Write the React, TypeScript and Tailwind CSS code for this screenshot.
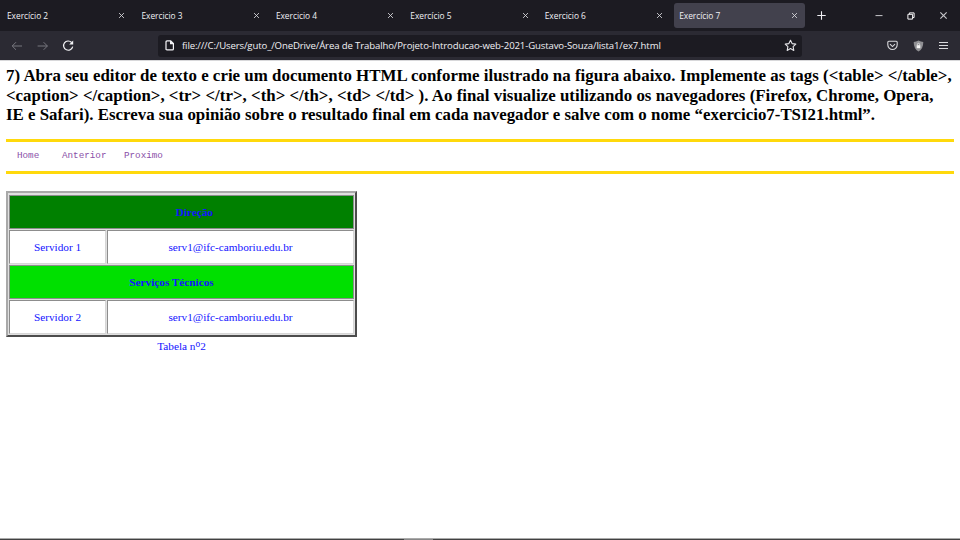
import React from "react";

const tabs = ["Exercício 2", "Exercicio 3", "Exercicio 4", "Exercício 5", "Exercicio 6", "Exercício 7"];

function Cross({ className, size }: { className: string; size: number }) {
  return (
    <svg className={className} width={size} height={size} viewBox="0 0 8 8" fill="none" stroke="currentColor" strokeWidth="1">
      <path d="M1.2 1.2 6.8 6.8M6.8 1.2 1.2 6.8" />
    </svg>
  );
}

function Tab({ title, active }: { title: string; active: boolean }) {
  return (
    <div
      className={
        active
          ? "flex h-[25px] w-[131.3px] shrink-0 items-center justify-between rounded-[3px] bg-[#42414d] pr-[7px] pl-[5.5px]"
          : "flex h-[25px] w-[131.3px] shrink-0 items-center justify-between pr-[7.5px] pl-[5.5px]"
      }
    >
      <span className="text-[8.4px] leading-3 tracking-[-0.03px] whitespace-nowrap text-[#f0f0f4]">{title}</span>
      <Cross className="text-[#d8d8dd]" size={7} />
    </div>
  );
}

function TabBar() {
  return (
    <div className="flex h-[31px] items-center bg-[#1c1b22] pl-[1.5px]">
      <div className="flex gap-[3.15px]">
        {tabs.map((t, i) => (
          <Tab key={t} title={t} active={i === 5} />
        ))}
      </div>
      <svg className="ml-3 text-[#f0f0f4]" width="9" height="9" viewBox="0 0 9 9" stroke="currentColor" strokeWidth="1.1">
        <path d="M4.5 .3v8.4M.3 4.5h8.4" />
      </svg>
      <div className="mr-3 ml-auto flex items-center gap-6">
        <svg width="8" height="8" viewBox="0 0 8 8" stroke="#c8c8cc" strokeWidth="1">
          <path d="M.5 3.6h7" />
        </svg>
        <svg width="8" height="8" viewBox="0 0 8 8" fill="none" stroke="#f8f8fa" strokeWidth="1">
          <path d="M.9 2.3h4.7v4.8H.9zM2.4 2.1V.9h4.7v4.6H5.9" />
        </svg>
        <Cross className="text-[#c8c8cc]" size={9} />
      </div>
    </div>
  );
}

function Toolbar() {
  return (
    <div className="flex h-[29px] items-center bg-[#2b2a33] pl-[11px]">
      <svg width="12" height="10" viewBox="0 0 12 10" fill="none" stroke="#77767e" strokeWidth="1">
        <path d="M11 5H1.2M5 1.2 1.2 5 5 8.8" />
      </svg>
      <svg className="ml-[14px]" width="12" height="10" viewBox="0 0 12 10" fill="none" stroke="#77767e" strokeWidth="1">
        <path d="M.6 5h9.8M6.6 1.2 10.4 5 6.6 8.8" />
      </svg>
      <svg className="ml-[12.5px]" width="13" height="12" viewBox="0 0 13 12" fill="none" stroke="#f4f4f7" strokeWidth="1.2">
        <path d="M10.7 6.6A4.6 4.6 0 1 1 9.6 2.5" />
        <path d="M11.2.6v4H7.2z" fill="#f4f4f7" stroke="none" />
      </svg>
      <div className="ml-[83.5px] flex h-[22px] w-[644px] items-center rounded-[3px] bg-[#1c1b22] pr-[5px] pl-[6.5px]">
        <svg width="10" height="11" viewBox="0 0 10 11" fill="none" stroke="#f4f4f7" strokeWidth="1.2">
          <path d="M2 .9h3.7L8.4 3.6v5.3q0 1-1 1H2q-1 0-1-1v-7q0-1 1-1z" />
          <path d="M5.6.9v2.8h2.8" fill="#f4f4f7" />
        </svg>
        <span className="ml-[7.5px] text-[9.6px] leading-4 tracking-[-0.13px] whitespace-nowrap text-[#f0f0f4]">
          file:///C:/Users/guto_/OneDrive/Área de Trabalho/Projeto-Introducao-web-2021-Gustavo-Souza/lista1/ex7.html
        </span>
        <svg className="ml-auto" width="13" height="13" viewBox="0 0 13 13" fill="none" stroke="#e6e6ea" strokeWidth="1.1" strokeLinejoin="round">
          <path d="m6.5 1.2 1.6 3.4 3.7.5-2.7 2.6.7 3.7-3.3-1.8-3.3 1.8.7-3.7L1.2 5.1l3.7-.5z" />
        </svg>
      </div>
      <div className="mr-3 ml-auto flex items-center gap-[15px]">
        <svg width="11" height="11" viewBox="0 0 11 11" fill="none" stroke="#d8d8dc" strokeWidth="1.1">
          <path d="M1.8 1.2h7.4q1 0 1 1v2.6a4.7 4.7 0 0 1-9.4 0V2.2q0-1 1-1z" />
          <path d="m3 4.2 2.5 2.4L8 4.2" />
        </svg>
        <svg width="11" height="12" viewBox="0 0 11 12">
          <path d="M5.5.4q2.4 1.4 4.8 1.5 0 7-4.8 9.6Q.7 8.9.7 1.9 3.1 1.8 5.5.4z" fill="#8f8f93" />
          <path d="M3.7 5.2h3.6v3H3.7z" fill="#f5f5f5" />
          <path d="M4.4 5.2V4.4a1.1 1.1 0 0 1 2.2 0v.8" fill="none" stroke="#f5f5f5" strokeWidth=".7" />
        </svg>
        <svg width="9" height="9" viewBox="0 0 9 9" stroke="#d8d8dc" strokeWidth="1">
          <path d="M0 1.5h9M0 4.5h9M0 7.5h9" />
        </svg>
      </div>
    </div>
  );
}

const cell = "flex items-center justify-center border border-t-[#8d8d8d] border-r-[#d6d6d6] border-b-[#d6d6d6] border-l-[#8d8d8d]";
const headingCell = "flex items-center justify-center border border-[#8d8d8d]";

function StaffRow({ name }: { name: string }) {
  return (
    <div className="flex h-[34px] gap-px">
      <div className={cell + " w-[97px] bg-white"}>{name}</div>
      <div className={cell + " flex-1 bg-white"}>serv1@ifc-camboriu.edu.br</div>
    </div>
  );
}

export default function App() {
  return (
    <div className="flex h-[540px] w-[960px] flex-col overflow-hidden bg-white">
      <header className="font-['Open_Sans','Noto_Sans',sans-serif]">
        <TabBar />
        <Toolbar />
      </header>
      <main className="flex flex-1 flex-col border-t border-[#d8d8da] px-[6px] font-['Liberation_Serif',serif]">
        <h1 className="mt-[5px] text-[16.87px] leading-[19.7px] font-bold whitespace-nowrap text-black">
          <span className="tracking-[0.023px]">
            7) Abra seu editor de texto e crie um documento HTML conforme ilustrado na figura abaixo. Implemente as tags (&lt;table&gt; &lt;/table&gt;,
          </span>
          <br />
          <span className="tracking-[0.015px]">
            &lt;caption&gt; &lt;/caption&gt;, &lt;tr&gt; &lt;/tr&gt;, &lt;th&gt; &lt;/th&gt;, &lt;td&gt; &lt;/td&gt; ). Ao final visualize utilizando os navegadores (Firefox, Chrome, Opera,
          </span>
          <br />
          IE e Safari). Escreva sua opinião sobre o resultado final em cada navegador e salve com o nome “exercicio7-TSI21.html”.
        </h1>
        <nav className="mt-[13.4px] flex h-[35px] items-center border-y-3 border-[#ffd90c] pl-[11px] font-['Liberation_Mono',monospace] text-[9.28px] text-[#8a4fa8]">
          <a className="w-[45px]">Home</a>
          <a className="w-[62px]">Anterior</a>
          <a>Proximo</a>
        </nav>
        <section className="mt-[17.6px] w-[351px] text-[11.25px] leading-[13px] text-[#1414ff]">
          <div className="flex h-[146px] flex-col gap-px border-2 border-t-[#a9a9a9] border-r-[#4c4c4c] border-b-[#4c4c4c] border-l-[#a9a9a9] bg-[#e0e0e0] px-px pt-[2px] pb-px">
            <div className={headingCell + " h-[34px] bg-[#008000] pl-[26px] font-bold"}>Direção</div>
            <StaffRow name="Servidor 1" />
            <div className={headingCell + " h-[34px] bg-[#00e000] pr-[20px] font-bold"}>Serviços Técnicos</div>
            <StaffRow name="Servidor 2" />
          </div>
          <p className="mt-[3px] text-center">
            Tabela n<sup className="relative -top-[3px] align-baseline text-[9.4px] leading-none">o</sup>2
          </p>
        </section>
      </main>
      <footer className="flex h-[2px] flex-col">
        <div className="h-px bg-[#aaaaaa]" />
        <div className="flex h-px bg-[#414141]">
          <div className="ml-[404px] w-[29px] bg-[#888888]" />
        </div>
      </footer>
    </div>
  );
}
